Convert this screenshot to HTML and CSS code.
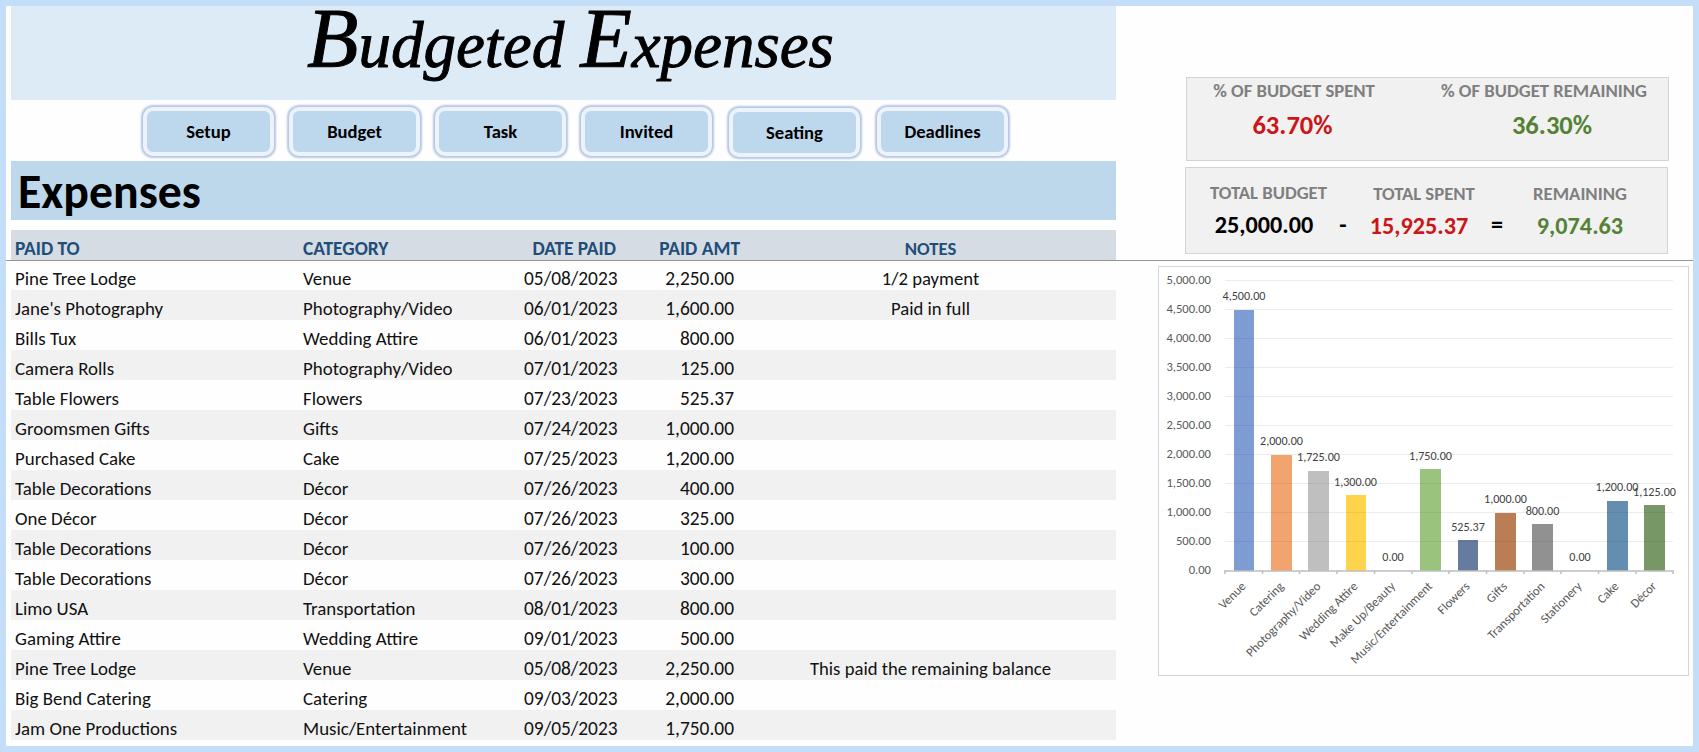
FILE: index.html
```html
<!DOCTYPE html>
<html>
<head>
<meta charset="utf-8">
<title>Budgeted Expenses</title>
<link rel="stylesheet" href="styles.css">
</head>
<body>
<div class="sheet">

  <div class="top">
    <div class="main">
      <h1><span class="cap">B</span>udgeted <span class="cap">E</span>xpenses</h1>
      <nav>
        <a>Setup</a>
        <a>Budget</a>
        <a>Task</a>
        <a>Invited</a>
        <a class="low">Seating</a>
        <a class="last">Deadlines</a>
      </nav>
      <h2>Expenses</h2>
      <div class="row head">
        <span>PAID TO</span><span>CATEGORY</span><span class="date">DATE PAID</span><span class="amt">PAID AMT</span><span class="notes">NOTES</span>
      </div>
    </div>

    <div class="totals">
      <div class="card percent">
        <div class="spent"><h3>% OF BUDGET SPENT</h3><b class="red">63.70%</b></div>
        <div class="remaining"><h3>% OF BUDGET REMAINING</h3><b class="green">36.30%</b></div>
      </div>
      <div class="card sum">
        <div class="budget"><h3>TOTAL BUDGET</h3><b>25,000.00</b></div>
        <i>-</i>
        <div class="down"><h3>TOTAL SPENT</h3><b class="red">15,925.37</b></div>
        <i>=</i>
        <div class="down"><h3>REMAINING</h3><b class="green">9,074.63</b></div>
      </div>
    </div>
  </div>

  <div class="bottom">
    <div class="main list">
      <div class="row"><span>Pine Tree Lodge</span><span>Venue</span><span class="date">05/08/2023</span><span class="amt">2,250.00</span><span class="notes">1/2 payment</span></div>
      <div class="row"><span>Jane's Photography</span><span>Photography/Video</span><span class="date">06/01/2023</span><span class="amt">1,600.00</span><span class="notes">Paid in full</span></div>
      <div class="row"><span>Bills Tux</span><span>Wedding Attire</span><span class="date">06/01/2023</span><span class="amt">800.00</span></div>
      <div class="row"><span>Camera Rolls</span><span>Photography/Video</span><span class="date">07/01/2023</span><span class="amt">125.00</span></div>
      <div class="row"><span>Table Flowers</span><span>Flowers</span><span class="date">07/23/2023</span><span class="amt">525.37</span></div>
      <div class="row"><span>Groomsmen Gifts</span><span>Gifts</span><span class="date">07/24/2023</span><span class="amt">1,000.00</span></div>
      <div class="row"><span>Purchased Cake</span><span>Cake</span><span class="date">07/25/2023</span><span class="amt">1,200.00</span></div>
      <div class="row"><span>Table Decorations</span><span>Décor</span><span class="date">07/26/2023</span><span class="amt">400.00</span></div>
      <div class="row"><span>One Décor</span><span>Décor</span><span class="date">07/26/2023</span><span class="amt">325.00</span></div>
      <div class="row"><span>Table Decorations</span><span>Décor</span><span class="date">07/26/2023</span><span class="amt">100.00</span></div>
      <div class="row"><span>Table Decorations</span><span>Décor</span><span class="date">07/26/2023</span><span class="amt">300.00</span></div>
      <div class="row"><span>Limo USA</span><span>Transportation</span><span class="date">08/01/2023</span><span class="amt">800.00</span></div>
      <div class="row"><span>Gaming Attire</span><span>Wedding Attire</span><span class="date">09/01/2023</span><span class="amt">500.00</span></div>
      <div class="row"><span>Pine Tree Lodge</span><span>Venue</span><span class="date">05/08/2023</span><span class="amt">2,250.00</span><span class="notes">This paid the remaining balance</span></div>
      <div class="row"><span>Big Bend Catering</span><span>Catering</span><span class="date">09/03/2023</span><span class="amt">2,000.00</span></div>
      <div class="row"><span>Jam One Productions</span><span>Music/Entertainment</span><span class="date">09/05/2023</span><span class="amt">1,750.00</span></div>
    </div>

    <svg class="chart" width="531" height="410" viewBox="0 0 531 410">
      <rect class="frame" x="0.5" y="0.5" width="530" height="409"/>
      <path class="grid" d="M67 14.5H515M67 43.5H515M67 72.5H515M67 101.5H515M67 130.5H515M67 159.5H515M67 188.5H515M67 217.5H515M67 246.5H515M67 275.5H515"/>
      <g class="axis">
        <text x="53" y="18">5,000.00</text>
        <text x="53" y="47">4,500.00</text>
        <text x="53" y="76">4,000.00</text>
        <text x="53" y="105">3,500.00</text>
        <text x="53" y="134">3,000.00</text>
        <text x="53" y="163">2,500.00</text>
        <text x="53" y="192">2,000.00</text>
        <text x="53" y="221">1,500.00</text>
        <text x="53" y="250">1,000.00</text>
        <text x="53" y="279">500.00</text>
        <text x="53" y="308">0.00</text>
      </g>
      <g class="bars">
        <rect x="76" y="44" width="20" height="261" fill="#7c9cd3"/>
        <rect x="113" y="189" width="21" height="116" fill="#f1a46e"/>
        <rect x="150" y="205" width="21" height="100" fill="#bfbfbf"/>
        <rect x="188" y="229" width="20" height="76" fill="#ffd34c"/>
        <rect x="262" y="203" width="21" height="102" fill="#9ac47e"/>
        <rect x="300" y="274" width="20" height="31" fill="#667ba0"/>
        <rect x="337" y="247" width="21" height="58" fill="#bb7e54"/>
        <rect x="374" y="258" width="21" height="47" fill="#919191"/>
        <rect x="449" y="235" width="21" height="70" fill="#638eb0"/>
        <rect x="486" y="239" width="21" height="66" fill="#789766"/>
      </g>
      <path class="gridover" d="M76 72.5h20M76 101.5h20M76 130.5h20M76 159.5h20M76 188.5h20M76 217.5h20M113 217.5h21M150 217.5h21M76 246.5h20M113 246.5h21M150 246.5h21M188 246.5h20M76 275.5h20M113 275.5h21M150 275.5h21M188 275.5h20M262 217.5h21M262 246.5h21M262 275.5h21M300 275.5h20M337 275.5h21M374 275.5h21M449 246.5h21M486 246.5h21M449 275.5h21M486 275.5h21"/>
      <path class="base" d="M66 305H516M67 305v3M104.500 305v3M141.500 305v3M179 305v3M216.500 305v3M254 305v3M291 305v3M328.500 305v3M366 305v3M403 305v3M440.500 305v3M478 305v3M515 305v3"/>
      <g class="values">
        <text x="86" y="34">4,500.00</text>
        <text x="123.500" y="179">2,000.00</text>
        <text x="160.500" y="195">1,725.00</text>
        <text x="197.500" y="220">1,300.00</text>
        <text x="235" y="295">0.00</text>
        <text x="272.500" y="194">1,750.00</text>
        <text x="310" y="265">525.37</text>
        <text x="347.500" y="237">1,000.00</text>
        <text x="384.500" y="249">800.00</text>
        <text x="422" y="295">0.00</text>
        <text x="459" y="225">1,200.00</text>
        <text x="496.500" y="230">1,125.00</text>
      </g>
      <g class="names">
        <text transform="translate(88.500 321) rotate(-45)">Venue</text>
        <text transform="translate(126.500 321) rotate(-45)">Catering</text>
        <text transform="translate(163.500 321) rotate(-45)">Photography/Video</text>
        <text transform="translate(200.500 321) rotate(-45)">Wedding Attire</text>
        <text transform="translate(238 321) rotate(-45)">Make Up/Beauty</text>
        <text transform="translate(275 321) rotate(-45)">Music/Entertainment</text>
        <text transform="translate(312.500 321) rotate(-45)">Flowers</text>
        <text transform="translate(350 321) rotate(-45)">Gifts</text>
        <text transform="translate(387.500 321) rotate(-45)">Transportation</text>
        <text transform="translate(424.500 321) rotate(-45)">Stationery</text>
        <text transform="translate(461.500 321) rotate(-45)">Cake</text>
        <text transform="translate(499 321) rotate(-45)">Décor</text>
      </g>
    </svg>
  </div>

</div>
</body>
</html>
```
FILE: styles.css
```css
*{
  box-sizing: border-box;
}
body{
  margin: 0;
  font-family: Calibri, Carlito, Lato, sans-serif;
  color: #111;
}
.sheet{
  width: 1699px;
  height: 752px;
  border: 6px solid #c4def9;
  background-color: #fefefe;
}
.top, .bottom{
  display: flex;
}
.top{
  height: 255px;
  border-bottom: 1px solid #949494;
}
.main{
  width: 1105px;
  margin-left: 5px;
}
h1{
  height: 94px;
  margin: 0;
  padding-left: 14px;
  background-color: #ddebf6;
  color: #000;
  font: italic 65px/66px "Liberation Serif", serif;
  text-align: center;
  white-space: nowrap;
  -webkit-text-stroke: 1px #000;
}
h1 .cap{
  font-size: 84px;
}
nav{
  display: flex;
  gap: 23px;
  height: 61px;
  padding: 11px 0 0 136px;
}
/* pale ring and a soft outer edge round each button */
nav a{
  width: 123px;
  height: 41px;
  border-radius: 6px;
  background-color: #bdd7ec;
  box-shadow: 0 0 0 4px #ecf3fc, 0 0 2px 6px #b7c7e2;
  color: #000;
  font-size: 18.6px;
  font-weight: bold;
  line-height: 41px;
  text-align: center;
}
nav .low{
  margin: 1px 0 0 2px;
}
nav .last{
  margin-left: 2px;
}
h2{
  height: 59px;
  margin: 0 0 10px;
  padding-left: 7px;
  background-color: #bdd7eb;
  color: #000;
  font-size: 47.8px;
  line-height: 62px;
}
.row{
  display: grid;
  grid-template-columns: 288px 221px 100px 125px 371px;
  height: 30px;
  padding-top: 6px;
  font-size: 18.9px;
  line-height: 25px;
  white-space: nowrap;
}
.row span{
  padding-left: 4px;
}
.row .date{
  padding-right: 4px;
  font-size: 19.4px;
  text-align: right;
}
.row .amt{
  padding-right: 11px;
  font-size: 19.4px;
  text-align: right;
}
.row .notes{
  padding: 0;
  font-size: 18.7px;
  text-align: center;
}
.head{
  padding-top: 5px;
  background-color: #d6dce4;
  color: #1f4e79;
  font-size: 19.4px;
  font-weight: bold;
  line-height: 27px;
}
.head .amt{
  padding-right: 5px;
}
.list{
  margin-top: -1px;
}
.list .row:nth-child(even){
  background-color: #f1f1f1;
}
.totals{
  padding: 71px 0 0 69px;
}
.card{
  display: grid;
  width: 483px;
  border: 1px solid #d4d4d4;
  background-color: #f1f1f1;
  text-align: center;
}
.card h3{
  margin: 0;
  color: #7f7f7f;
  font-size: 18.7px;
  line-height: 20px;
  white-space: nowrap;
}
.card b{
  display: block;
  color: #000;
  font-size: 24.2px;
  line-height: 28px;
}
.card .red{
  color: #cb1517;
}
.card .green{
  color: #548235;
}
.percent{
  grid-template-columns: 214px 248px;
  column-gap: 19px;
  height: 84px;
  margin-left: 1px;
  padding-top: 3px;
}
.percent b{
  margin-top: 10px;
  padding-right: 3px;
  font-size: 26.5px;
}
.remaining b{
  padding: 0 0 0 16px;
}
.sum{
  grid-template-columns: 121px 28px 134px 12px 154px;
  height: 87px;
  margin-top: 6px;
  padding: 15px 0 0 22px;
}
.sum b{
  margin-top: 8px;
}
.sum i{
  padding-top: 27px;
  color: #000;
  font-size: 24px;
  font-style: normal;
  font-weight: bold;
}
.budget b{
  padding-right: 9px;
}
.sum .down{
  padding-top: 1px;
}
.down .red{
  padding-right: 10px;
}
.chart{
  margin: 5px 0 0 42px;
}
.frame{
  fill: #fff;
  stroke: #d6d6d6;
}
.grid{
  stroke: #ececec;
}
.gridover{
  stroke: rgba(0, 0, 0, 0.06);
}
.base{
  fill: none;
  stroke: #bfbfbf;
  stroke-width: 1.5;
}
.axis text{
  fill: #595959;
  font-size: 12.6px;
  text-anchor: end;
}
.values text{
  fill: #404040;
  font-size: 12.1px;
  text-anchor: middle;
}
.names text{
  fill: #595959;
  font-size: 12.6px;
  text-anchor: end;
}
```
